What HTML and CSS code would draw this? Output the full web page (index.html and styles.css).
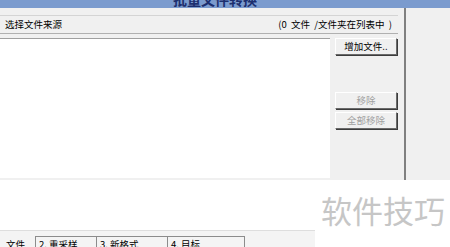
FILE: index.html
```html
<!DOCTYPE html>
<html lang="zh">
<head>
    <meta charset="UTF-8">
    <meta name="viewport" content="width=device-width, initial-scale=1.0">
    <title>批量文件转换</title>
    <link rel="stylesheet" href="styles.css">
</head>
<body>
    <div class="window">
        <div class="titlebar"><span class="title">批量文件转换</span></div>

        <div class="main">
            <div class="panel">
                <div class="header">
                    <span>选择文件来源</span>
                    <span>(0&nbsp;&nbsp;文件&nbsp;&nbsp;/文件夹在列表中&nbsp;&nbsp;)</span>
                </div>

                <div class="content">
                    <div class="filelist"></div>
                    <div class="buttons">
                        <button class="btn">增加文件..</button>
                        <div class="spacer"></div>
                        <button class="btn" disabled>移除</button>
                        <button class="btn" disabled>全部移除</button>
                    </div>
                </div>
            </div>
        </div>
    </div>

    <div class="bottom">
        <div class="watermark">软件技巧</div>
        <div class="tabs">
            <div class="tab active">文件</div>
            <div class="tab t2">2. 重采样</div>
            <div class="tab t3">3. 新格式</div>
            <div class="tab t4">4. 目标</div>
        </div>
    </div>
</body>
</html>
```

FILE: styles.css
```css
* {
    margin: 0;
    padding: 0;
    box-sizing: border-box;
}

body {
    width: 450px;
    height: 247px;
    overflow: hidden;
    background: #ffffff;
    font-family: "Noto Sans CJK SC", "DejaVu Sans", sans-serif;
    font-size: 9.5px;
    color: #000;
}

.window {
    height: 180px;
    background: #f0f0f0;
    display: flex;
    flex-direction: column;
}

/* only the lower edge of the title is visible in the shot */
.titlebar {
    height: 8px;
    background: #7b9bce;
    overflow: hidden;
    display: flex;
    justify-content: center;
    align-items: flex-end;
    padding-right: 20px;
}

.title {
    font-size: 14px;
    line-height: 14px;
    margin-bottom: 2px;
    color: #1d2f6e;
    font-weight: bold;
}

.main {
    flex: 1;
    display: flex;
}

.panel {
    width: 406px;
    padding-top: 4px;
    border-right: 2px solid #808080;
    display: flex;
    flex-direction: column;
}

.header {
    margin-top: 3px;
    margin-right: 6px;
    height: 19px;
    border-top: 1px solid #d4d4d4;
    border-bottom: 1px solid #b0b0b0;
    display: flex;
    justify-content: space-between;
    align-items: center;
    padding: 0 6px 0 5px;
    line-height: 1;
}

.content {
    flex: 1;
    display: flex;
    padding-top: 4px;
}

.filelist {
    width: 330px;
    background: #fff;
    border-top: 1px solid #a0a0a0;
    margin-bottom: 2px;
}

.buttons {
    display: flex;
    flex-direction: column;
    gap: 3px;
    padding-left: 5px;
    width: 68px;
}

.spacer {
    height: 31px;
}

.btn {
    width: 62px;
    height: 17px;
    font-family: inherit;
    font-size: 9.5px;
    line-height: 1;
    background: #f0f0f0;
    color: #000;
    border: 1px solid;
    border-color: #ffffff #6a6a6a #6a6a6a #ffffff;
    box-shadow: 1px 1px 0 #3c3c3c;
}

.btn:disabled {
    color: #a0a0a0;
}

.bottom {
    height: 67px;
    display: flex;
    flex-direction: column;
}

.watermark {
    align-self: flex-end;
    margin-top: 12px;
    margin-right: 5px;
    font-size: 31px;
    line-height: 36px;
    color: #c6c6c6;
}

.tabs {
    width: 315px;
    margin-top: auto;
    height: 17px;
    border-top: 1px solid #dedede;
    padding-top: 5px;
    display: flex;
    background: #f4f4f4;
}

.tab {
    padding-left: 3px;
    padding-top: 2px;
    line-height: 11px;
    border-top: 1px solid #8c8c8c;
    border-left: 1px solid #8c8c8c;
    background: #f4f4f4;
}

.tab.active {
    width: 35px;
    padding-left: 6px;
    border: none;
    padding-top: 3px;
}

.t2 {
    width: 61px;
}

.t3 {
    width: 71px;
}

.t4 {
    width: 78px;
    border-right: 1px solid #8c8c8c;
}
```
